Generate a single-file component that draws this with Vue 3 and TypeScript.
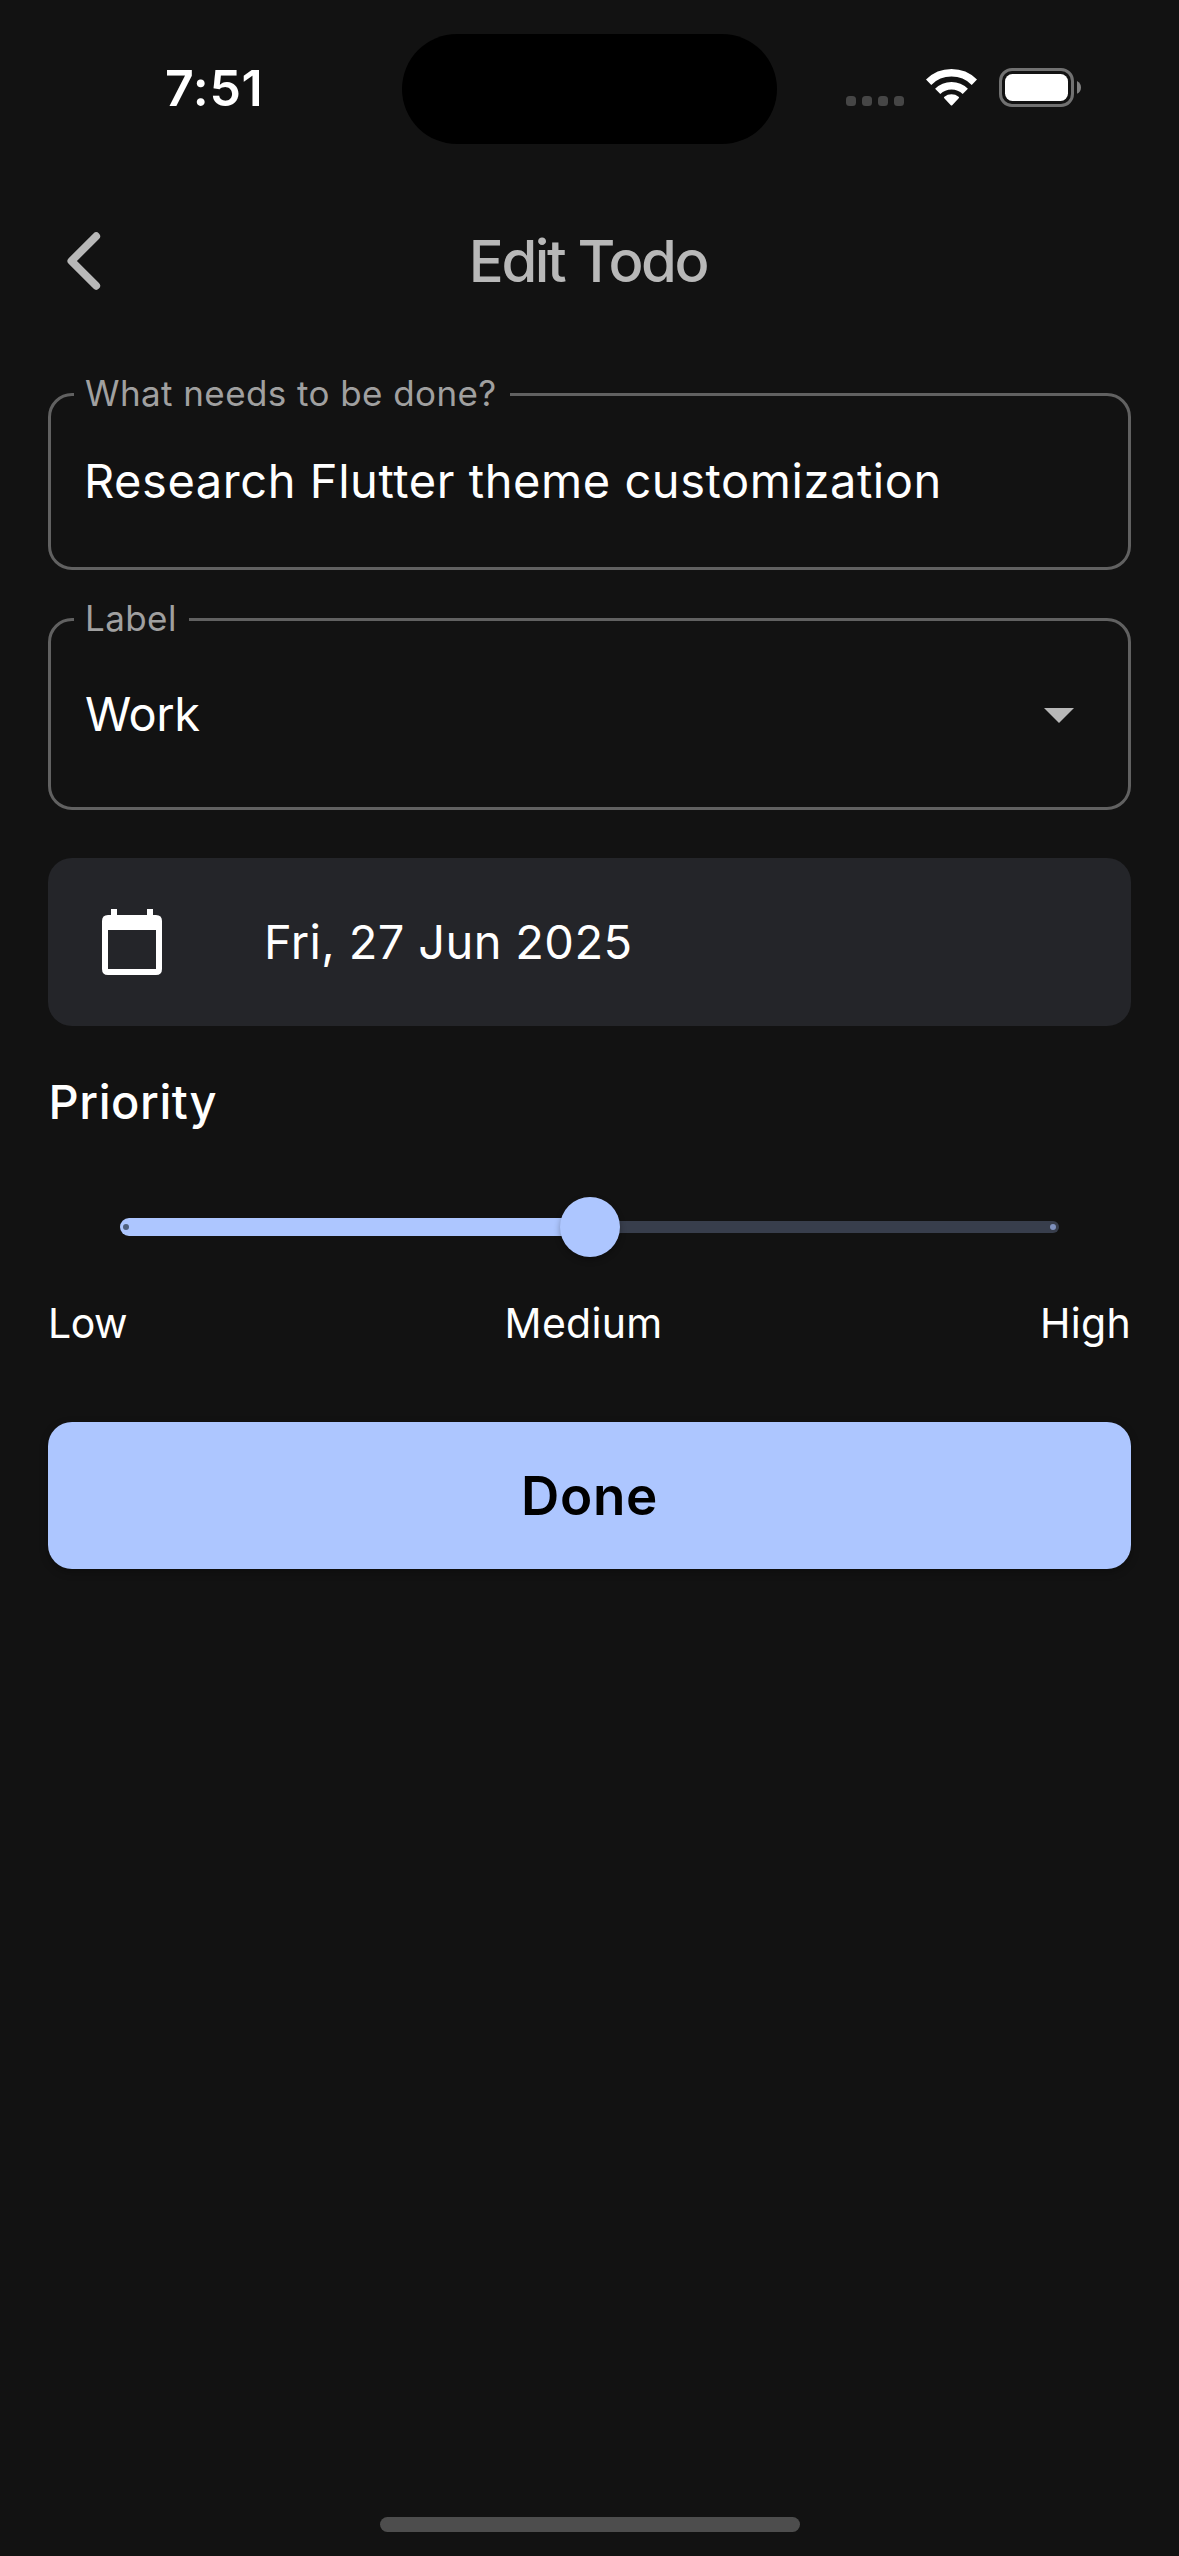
<script setup lang="ts">
import { ref } from 'vue'

const title = ref('Research Flutter theme customization')
const label = ref('Work')
const dueDate = ref('Fri, 27 Jun 2025')
const priority = ref(50)
const levels = ['Low', 'Medium', 'High']
</script>

<template>
  <div class="screen">
    <header class="status">
      <div class="clock"><span>7:51</span></div>
      <div class="island"></div>
      <div class="indicators">
        <div class="cell"><i v-for="n in 4" :key="n"></i></div>
        <svg class="wifi" width="51" height="37" viewBox="0 0 51 37">
          <g fill="none" stroke="#fff">
            <path d="M2.6 13.2A32.6 32.6 0 0 1 48.4 13.2" stroke-width="7.6" />
            <path d="M11.7 22.4A19.6 19.6 0 0 1 39.3 22.4" stroke-width="7.4" />
          </g>
          <path d="M18.3 29.3Q17.4 28.4 18.4 27.7A11.5 11.5 0 0 1 32.6 27.7Q33.6 28.4 32.7 29.3L26.2 36.2Q25.5 36.9 24.8 36.2Z" fill="#fff" />
        </svg>
        <svg class="battery" width="84" height="39" viewBox="0 0 84 39">
          <rect x="1.5" y="1.5" width="72" height="36" rx="11.5" fill="none" stroke="#717171" stroke-width="3" />
          <rect x="6" y="6" width="63" height="27" rx="7.5" fill="#fff" />
          <path d="M78 13Q82 15.200 82 19.400Q82 23.600 78 25.800Z" fill="#808080" />
        </svg>
      </div>
    </header>

    <nav class="bar">
      <svg class="back" width="34" height="58" viewBox="0 0 34 58">
        <path d="M29.2 4.2L4.4 29L29.2 53.8" fill="none" stroke="#b8b8b8" stroke-width="7.8" stroke-linecap="round" stroke-linejoin="round" />
      </svg>
      <h1><span>Edit Todo</span></h1>
    </nav>

    <main>
      <fieldset class="field first">
        <legend><span>What needs to be done?</span></legend>
        <div class="row"><span>{{ title }}</span></div>
      </fieldset>

      <fieldset class="field second">
        <legend><span>Label</span></legend>
        <div class="row">
          <span>{{ label }}</span>
          <svg width="30" height="15" viewBox="0 0 30 15"><path d="M0 0H30L15 15Z" fill="#b8b8b8" /></svg>
        </div>
      </fieldset>

      <div class="date">
        <svg width="60" height="66" viewBox="0 0 60 66">
          <path fill="#fff" fill-rule="evenodd" d="M9 0H15V6H45V0H51V6H54Q60 6 60 12V60Q60 66 54 66H6Q0 66 0 60V12Q0 6 6 6H9ZM6 21V60H54V21Z" />
        </svg>
        <span>{{ dueDate }}</span>
      </div>

      <h2><span>Priority</span></h2>

      <div class="slider">
        <div class="active" :style="{ width: priority + '%' }"><i class="tick"></i></div>
        <div class="thumb"></div>
        <div class="rest"><i class="tick"></i></div>
      </div>

      <div class="levels">
        <span v-for="l in levels" :key="l" :class="l.toLowerCase()">{{ l }}</span>
      </div>

      <button type="button"><span>Done</span></button>
    </main>

    <div class="home"></div>
  </div>
</template>

<style>
html,
body {
  margin: 0;
  background: #121212;
}
</style>

<style scoped>
.screen {
  width: 1179px;
  height: 2556px;
  box-sizing: border-box;
  display: flex;
  flex-direction: column;
  overflow: hidden;
  background: #121212;
  color: #fff;
  font-family: Inter, Roboto, sans-serif;
}
span {
  white-space: nowrap;
}
svg {
  display: block;
  flex: none;
}
.status {
  height: 178px;
  flex: none;
  display: flex;
}
.clock {
  width: 402px;
  padding: 58px 0 0 165px;
  box-sizing: border-box;
  line-height: 60px;
  font-size: 50px;
  font-weight: 600;
  letter-spacing: 0.7px;
}
.island {
  width: 375px;
  height: 110px;
  margin-top: 34px;
  border-radius: 55px;
  background: #000;
}
.indicators {
  display: flex;
  padding: 68px 0 0 69px;
  align-items: flex-start;
}
.cell {
  display: flex;
  gap: 6px;
  padding-top: 28px;
}
.cell i {
  width: 10px;
  height: 10px;
  border-radius: 3.5px;
  background: #464646;
}
.wifi {
  margin: 1px 0 0 22px;
}
.battery {
  margin-left: 22px;
}
.bar {
  height: 166px;
  flex: none;
  display: flex;
  align-items: center;
  padding: 0 67px;
}
h1 {
  flex: 1;
  margin: 0 37px 0 0;
  text-align: center;
  font-size: 58px;
  line-height: 70px;
  font-weight: 500;
  letter-spacing: -2.4px;
  color: #b8b8b8;
}
main {
  padding: 0 48px;
  display: flex;
  flex-direction: column;
}
.field {
  box-sizing: border-box;
  min-width: 0;
  margin: 0;
  border: 3px solid #616161;
  border-radius: 24px;
}
.field legend {
  box-sizing: border-box;
  height: 43px;
  line-height: 40px;
  font-size: 35px;
  color: #a0a0a0;
}
.first {
  margin-top: 29px;
  height: 197px;
  padding: 35px 54px 0 33px;
  letter-spacing: 0.56px;
}
.first legend {
  width: 436px;
  margin-left: -10px;
  padding: 0 0 0 11px;
  letter-spacing: 0.42px;
}
.second {
  margin-top: 28px;
  height: 212px;
  padding: 43px 54px 0 34px;
  letter-spacing: -0.4px;
}
.second legend {
  width: 115px;
  margin-left: -11px;
  padding: 0 0 0 11px;
  letter-spacing: 0.4px;
}
.row {
  display: flex;
  justify-content: space-between;
  font-size: 47px;
  line-height: 60px;
}
.row svg {
  margin-top: 24px;
}
.date {
  height: 168px;
  margin-top: 48px;
  box-sizing: border-box;
  border-radius: 24px;
  background: #242529;
  display: flex;
  align-items: center;
  padding-left: 54px;
  gap: 102px;
  font-size: 47px;
  line-height: 60px;
  letter-spacing: 0.36px;
}
h2 {
  margin: 46px 0 0 0.5px;
  font-size: 47px;
  line-height: 60px;
  font-weight: 500;
  letter-spacing: 0.6px;
}
.slider {
  height: 60px;
  margin: 65px 72px 0;
  display: flex;
  align-items: center;
}
.active {
  height: 18px;
  border-radius: 9px 0 0 9px;
  background: #adc6ff;
  display: flex;
  align-items: center;
}
.thumb {
  width: 60px;
  height: 60px;
  margin: 0 -30px;
  z-index: 1;
  border-radius: 50%;
  background: #adc6ff;
  box-shadow: 0 3px 6px rgba(0, 0, 0, 0.3);
}
.rest {
  flex: 1;
  height: 12px;
  border-radius: 0 6px 6px 0;
  background: #383e4c;
  display: flex;
  align-items: center;
  justify-content: flex-end;
}
.tick {
  width: 6px;
  height: 6px;
  border-radius: 50%;
  margin-right: 3px;
  background: #7f91bd;
}
.active .tick {
  margin-left: 3px;
  background: #50617f;
}
.levels {
  margin-top: 41px;
  display: flex;
  justify-content: space-between;
  font-size: 41px;
  line-height: 50px;
  letter-spacing: 0.3px;
}
.low {
  letter-spacing: -0.5px;
}
button {
  height: 147px;
  margin-top: 74px;
  padding: 0;
  border: 0;
  border-radius: 24px;
  background: #adc6ff;
  box-shadow: 0 3px 9px rgba(0, 0, 0, 0.3);
  color: #000;
  font-family: inherit;
  font-size: 53px;
  font-weight: 600;
  letter-spacing: 0.7px;
}
.home {
  width: 420px;
  height: 15px;
  margin: auto auto 24px;
  border-radius: 8px;
  background: #4d4d4d;
}
</style>
